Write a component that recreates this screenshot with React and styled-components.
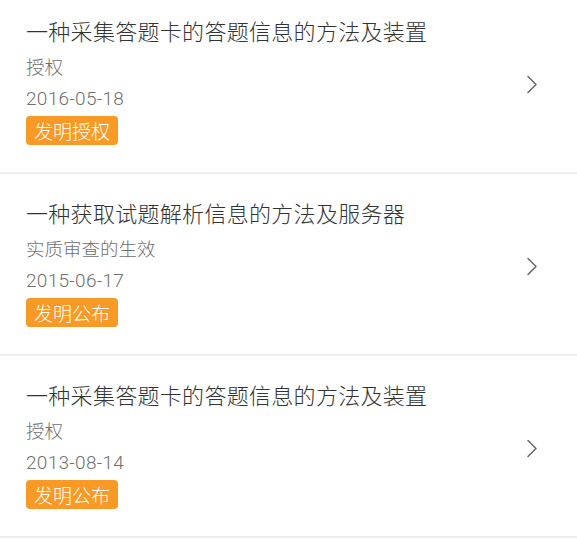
import React from "react";
import styled, { createGlobalStyle } from "styled-components";

const Global = createGlobalStyle`
  html, body { margin: 0; padding: 0; background: #ffffff; }
  body { font-family: "Noto Sans CJK SC", "Noto Sans", sans-serif; overflow: hidden; }
`;

const List = styled.div`
  margin-top: -8px;
  display: flex;
  flex-direction: column;
`;

const Card = styled.div`
  height: 182px;
  box-sizing: border-box;
  padding: 22px 39px 0 26px;
  display: flex;
  align-items: center;
  border-bottom: 2px solid #eeeeee;
  background: #fff;
`;

const Body = styled.div`
  flex: 1;
  align-self: flex-start;
  display: flex;
  flex-direction: column;
  align-items: flex-start;
`;

const Title = styled.div`
  font-size: 22px;
  font-weight: 300;
  letter-spacing: 0.3px;
  line-height: 32px;
  color: #333333;
`;

const Status = styled.div`
  margin-top: 3px;
  font-size: 18.5px;
  font-weight: 300;
  line-height: 34px;
  color: #707070;
`;

const DateText = styled.div`
  margin-top: 3px;
  font-family: Roboto, "Liberation Sans", "Noto Sans CJK SC", sans-serif;
  font-size: 19px;
  font-weight: 300;
  letter-spacing: 0.3px;
  line-height: 26px;
  color: #6f6f6f;
`;

const Badge = styled.span`
  margin-top: 4px;
  height: 29px;
  padding: 0 8px;
  display: inline-flex;
  align-items: center;
  border-radius: 4px;
  background: #f99a26;
  color: #ffffff;
  font-size: 19px;
  font-weight: 300;
  line-height: 29px;
`;

const Chevron = styled.svg`
  width: 12px;
  height: 19px;
  flex: none;
  margin-top: -18px;
`;

const items = [
  { title: "一种采集答题卡的答题信息的方法及装置", status: "授权", date: "2016-05-18", tag: "发明授权" },
  { title: "一种获取试题解析信息的方法及服务器", status: "实质审查的生效", date: "2015-06-17", tag: "发明公布" },
  { title: "一种采集答题卡的答题信息的方法及装置", status: "授权", date: "2013-08-14", tag: "发明公布" },
];

export default function App() {
  return (
    <>
      <Global />
      <List>
        {items.map((it, i) => (
          <Card key={i}>
            <Body>
              <Title>{it.title}</Title>
              <Status>{it.status}</Status>
              <DateText>{it.date}</DateText>
              <Badge>{it.tag}</Badge>
            </Body>
            <Chevron viewBox="0 0 12 19">
              <path d="M2 1.5 L10 9.5 L2 17.5" fill="none" stroke="#666" strokeWidth="1.5" strokeLinecap="round" strokeLinejoin="round" />
            </Chevron>
          </Card>
        ))}
      </List>
    </>
  );
}
